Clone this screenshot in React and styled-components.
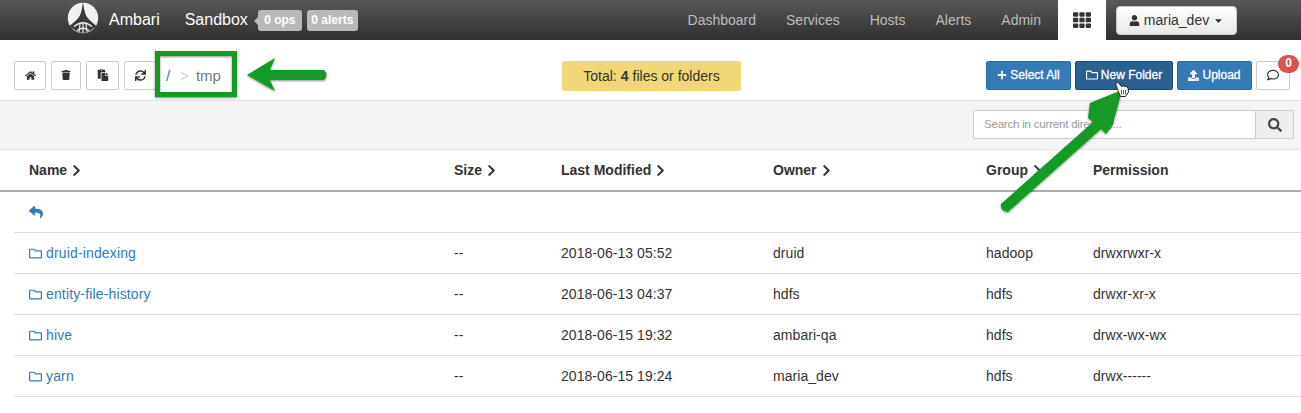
import React from "react";
import styled, { createGlobalStyle } from "styled-components";
import {
  FaHome, FaTrash, FaPaste, FaSync, FaTh, FaUser, FaPlus, FaRegFolder, FaUpload,
  FaRegComment, FaSearch, FaReply, FaChevronRight, FaCaretDown,
} from "react-icons/fa";

const Global = createGlobalStyle`
  html, body { margin: 0; padding: 0; background: #fff; }
  body { font-family: "Liberation Sans", Arial, sans-serif; font-size: 14px; color: #333; }
`;
const Page = styled.div`position: relative; width: 1301px; height: 413px; overflow: hidden;`;
const Header = styled.header`
  height: 40px; display: flex; align-items: center; padding-left: 67px;
  background: linear-gradient(#585858, #303030); color: #fff;
`;
const Logo = styled.svg`width: 32px; height: 32px; margin-top: -4px;`;
const Brand = styled.span`font-size: 16px; margin-left: 10px; color: #fff;`;
const Cluster = styled.span`font-size: 16px; margin-left: 25px; color: #fff; font-weight: 400;`;
const Pill = styled.span`
  position: relative; width: ${p => p.$w}px; text-align: center; box-sizing: border-box;
  background: #b9b9b9; color: #fff; font-size: 12px; font-weight: 700; border-radius: 3px;
  height: 21px; line-height: 21px; margin-left: ${p => p.$ml}px;
`;
const PillTail = styled.i`
  position: absolute; left: -4px; top: 7px; border-style: solid; border-width: 4px 4px 4px 0;
  border-color: transparent #b9b9b9 transparent transparent;
`;
const Nav = styled.nav`margin-left: auto; display: flex; align-items: center; height: 100%; padding-right: 64px;`;
const NavLink = styled.a`color: #bdbdbd; font-size: 14px; margin-right: 30px;`;
const NavGrid = styled.div`
  width: 48px; height: 40px; margin-left: -13px; background: #fff; color: #333;
  display: flex; align-items: center; justify-content: center; font-size: 18px;
`;
const UserBtn = styled.button`
  margin-left: 10px; width: 121px; height: 29px; background: linear-gradient(#fff, #e8e8e8);
  border: 1px solid #ccc; border-radius: 4px; color: #333; font: 14px "Liberation Sans", sans-serif;
  display: flex; align-items: center; justify-content: center; gap: 4px; padding: 0;
`;
const Toolbar = styled.div`
  height: 60px; display: flex; align-items: center; padding: 10px 11px 0 14px;
  box-sizing: border-box; position: relative; box-shadow: 0 1px 1px rgba(0,0,0,.08);
`;
const IconBtn = styled.button`
  width: ${p => p.$w}px; height: 29px; margin-right: 5px; padding: 0; background: #fff;
  border: 1px solid #ccc; border-radius: 2px; color: #333; font-size: ${p => p.$size}px;
  display: flex; align-items: center; justify-content: center;
`;
const Crumb = styled.div`display: flex; align-items: center; margin-left: 5px; width: 396px; font-size: 15px; color: #777;`;
const CrumbRoot = styled.span`color: #337ab7;`;
const CrumbSep = styled.span`color: #ccc; margin: 0 7px 0 10px;`;
const Total = styled.div`
  width: 179px; height: 30px; margin-top: 1px; background: #f0d878; border-radius: 2px; color: #333;
  display: flex; align-items: center; justify-content: center; font-size: 14px; gap: 4px;
`;
const Actions = styled.div`margin-left: auto; display: flex; align-items: center; gap: 4px; position: relative;`;
const PrimaryBtn = styled.button`
  width: ${p => p.$w}px; height: 29px; padding: 0; border-radius: 2px; color: #fff;
  background: ${p => (p.$active ? "#286090" : "#337ab7")};
  border: 1px solid ${p => (p.$active ? "#204d74" : "#2e6da4")};
  font: 400 12px "Liberation Sans", sans-serif; -webkit-text-stroke: 0.3px #fff;
  display: flex; align-items: center; justify-content: center; gap: 3px;
`;
const CommentBtn = styled.button`
  width: 34px; height: 29px; padding: 0; background: #fff; border: 1px solid #ccc; border-radius: 2px;
  color: #333; font-size: 12px; display: flex; align-items: center; justify-content: center;
`;
const CountBadge = styled.span`
  position: absolute; right: -9px; top: -6px; width: 21px; height: 18px; border-radius: 10px;
  background: #d9534f; color: #fff; font-size: 12px; font-weight: 700; line-height: 17px; text-align: center;
`;
const SearchBand = styled.div`
  height: 50px; background: #f5f5f5; border-bottom: 1px solid #e7e7e7; box-sizing: border-box;
  display: flex; align-items: center; justify-content: flex-end; padding: 0 7px 0 0;
`;
const SearchInput = styled.div`
  width: 283px; height: 29px; box-sizing: border-box; background: #fff; border: 1px solid #ccc;
  border-radius: 2px 0 0 2px; padding-left: 10px; line-height: 27px; font-size: 11.5px; letter-spacing: -.2px; color: #999;
`;
const SearchBtn = styled.div`
  width: 38px; height: 29px; box-sizing: border-box; background: #eee; border: 1px solid #ccc; border-left: 0;
  display: flex; align-items: center; justify-content: center; font-size: 14px; color: #444;
`;
const cols = "425px 107px 212px 213px 107px 1fr";
const HeadRow = styled.div`
  height: 42px; box-sizing: border-box; border-bottom: 2px solid #aaa; padding: 0 0 0 29px;
  display: grid; grid-template-columns: ${cols}; align-items: center; font-weight: 700; color: #333;
`;
const HeadCell = styled.div`display: flex; align-items: center; gap: 3px; font-size: 14px; svg { font-size: 13px; }`;
const Row = styled.div`
  height: 41px; box-sizing: border-box; border-bottom: 1px solid #ddd; margin-left: 14px; padding-left: 15px;
  display: grid; grid-template-columns: ${cols}; align-items: center; font-size: 14px; letter-spacing: .05px; color: #333;
`;
const FileLink = styled.a`color: #337ab7; display: flex; align-items: center; gap: 4px; letter-spacing: .15px;`;
const Overlay = styled.svg`position: absolute; left: 0; top: 0; pointer-events: none;`;

const rows = [
  ["druid-indexing", "2018-06-13 05:52", "druid", "hadoop", "drwxrwxr-x"],
  ["entity-file-history", "2018-06-13 04:37", "hdfs", "hdfs", "drwxr-xr-x"],
  ["hive", "2018-06-15 19:32", "ambari-qa", "hdfs", "drwx-wx-wx"],
  ["yarn", "2018-06-15 19:24", "maria_dev", "hdfs", "drwx------"],
];

export default function App() {
  return (
    <Page>
      <Global />
      <Header>
        <Logo viewBox="0 0 32 32">
          <circle cx="16" cy="16" r="15.2" fill="#f2f2f2" />
          <path d="M16 0 C17 7 18 12 20 15 C22 18 26 21 29.500 24 C25 28 20 31 16 31 C12 31 7 28 2.500 24 C6 21 10 18 12 15 C14 12 15 7 16 0 Z" fill="#3a3a3a" />
          <path d="M7 24.500 Q16 17 25 24.500 M10 28.500 Q16 24 22 28.500" stroke="#e8e8e8" strokeWidth="1.500" fill="none" />
          <path d="M13 22 L12 30 M19 22 L20 30 M16 21 V31" stroke="#e8e8e8" strokeWidth="1.200" fill="none" />
        </Logo>
        <Brand>Ambari</Brand>
        <Cluster>Sandbox</Cluster>
        <Pill $ml={10} $w={44}><PillTail />0 ops</Pill>
        <Pill $ml={5} $w={51}>0 alerts</Pill>
        <Nav>
          <NavLink>Dashboard</NavLink>
          <NavLink>Services</NavLink>
          <NavLink>Hosts</NavLink>
          <NavLink>Alerts</NavLink>
          <NavLink>Admin</NavLink>
          <NavGrid><FaTh /></NavGrid>
          <UserBtn><FaUser size={11} />maria_dev<FaCaretDown size={11} /></UserBtn>
        </Nav>
      </Header>
      <Toolbar>
        <IconBtn $w={32} $size={11}><FaHome /></IconBtn>
        <IconBtn $w={30} $size={10}><FaTrash /></IconBtn>
        <IconBtn $w={33} $size={12}><FaPaste /></IconBtn>
        <IconBtn $w={32} $size={11}><FaSync /></IconBtn>
        <Crumb><CrumbRoot>/</CrumbRoot><CrumbSep>&gt;</CrumbSep>tmp</Crumb>
        <Total>Total: <b>4</b> files or folders</Total>
        <Actions>
          <PrimaryBtn $w={85}><FaPlus size={10} />Select All</PrimaryBtn>
          <PrimaryBtn $w={98} $active><FaRegFolder size={12} />New Folder</PrimaryBtn>
          <PrimaryBtn $w={75}><FaUpload size={11} />Upload</PrimaryBtn>
          <CommentBtn><FaRegComment /></CommentBtn>
          <CountBadge>0</CountBadge>
        </Actions>
      </Toolbar>
      <SearchBand>
        <SearchInput>Search in current directory...</SearchInput>
        <SearchBtn><FaSearch /></SearchBtn>
      </SearchBand>
      <HeadRow>
        <HeadCell>Name <FaChevronRight /></HeadCell>
        <HeadCell>Size <FaChevronRight /></HeadCell>
        <HeadCell>Last Modified <FaChevronRight /></HeadCell>
        <HeadCell>Owner <FaChevronRight /></HeadCell>
        <HeadCell>Group <FaChevronRight /></HeadCell>
        <HeadCell>Permission</HeadCell>
      </HeadRow>
      <Row><FileLink><FaReply /></FileLink></Row>
      {rows.map(r => (
        <Row key={r[0]}>
          <FileLink><FaRegFolder size={13} />{r[0]}</FileLink>
          <div>--</div>
          <div>{r[1]}</div>
          <div>{r[2]}</div>
          <div>{r[3]}</div>
          <div>{r[4]}</div>
        </Row>
      ))}
      <Overlay width="1301" height="413" viewBox="0 0 1301 413">
        <defs>
          <filter id="sh" x="-20%" y="-20%" width="140%" height="140%">
            <feDropShadow dx="0" dy="1" stdDeviation="1.200" floodColor="#000" floodOpacity=".45" />
          </filter>
        </defs>
        <g filter="url(#sh)">
          <rect x="157.500" y="53.500" width="77" height="41" fill="none" stroke="#139a26" strokeWidth="5" />
          <path d="M247 75 L275 58 L270 70 L324 70 Q329 75 324 80 L270 80 L275 91 Z" fill="#139a26" />
          <path d="M1001 204 L1093 122 L1088 118 L1090 103 L1122 90 L1113 124 L1106 134 L1101 129 L1008 212 Q1000 211 1001 204 Z" fill="#139a26" />
        </g>
        <path d="M1115.500 83.500 Q1118 81.500 1119.500 84 L1121.500 86.500 Q1123 85 1124.500 86.500 Q1126.500 85.500 1128 88 L1128.500 92 L1125.500 96.500 L1120.500 96.500 L1118.500 92 Z" fill="#fff" stroke="#222" strokeWidth="1" />
        <path d="M1121.500 90 V94.500 M1123.500 90 V94.500 M1125.500 90 V94.500" stroke="#222" strokeWidth=".7" />
      </Overlay>
    </Page>
  );
}
